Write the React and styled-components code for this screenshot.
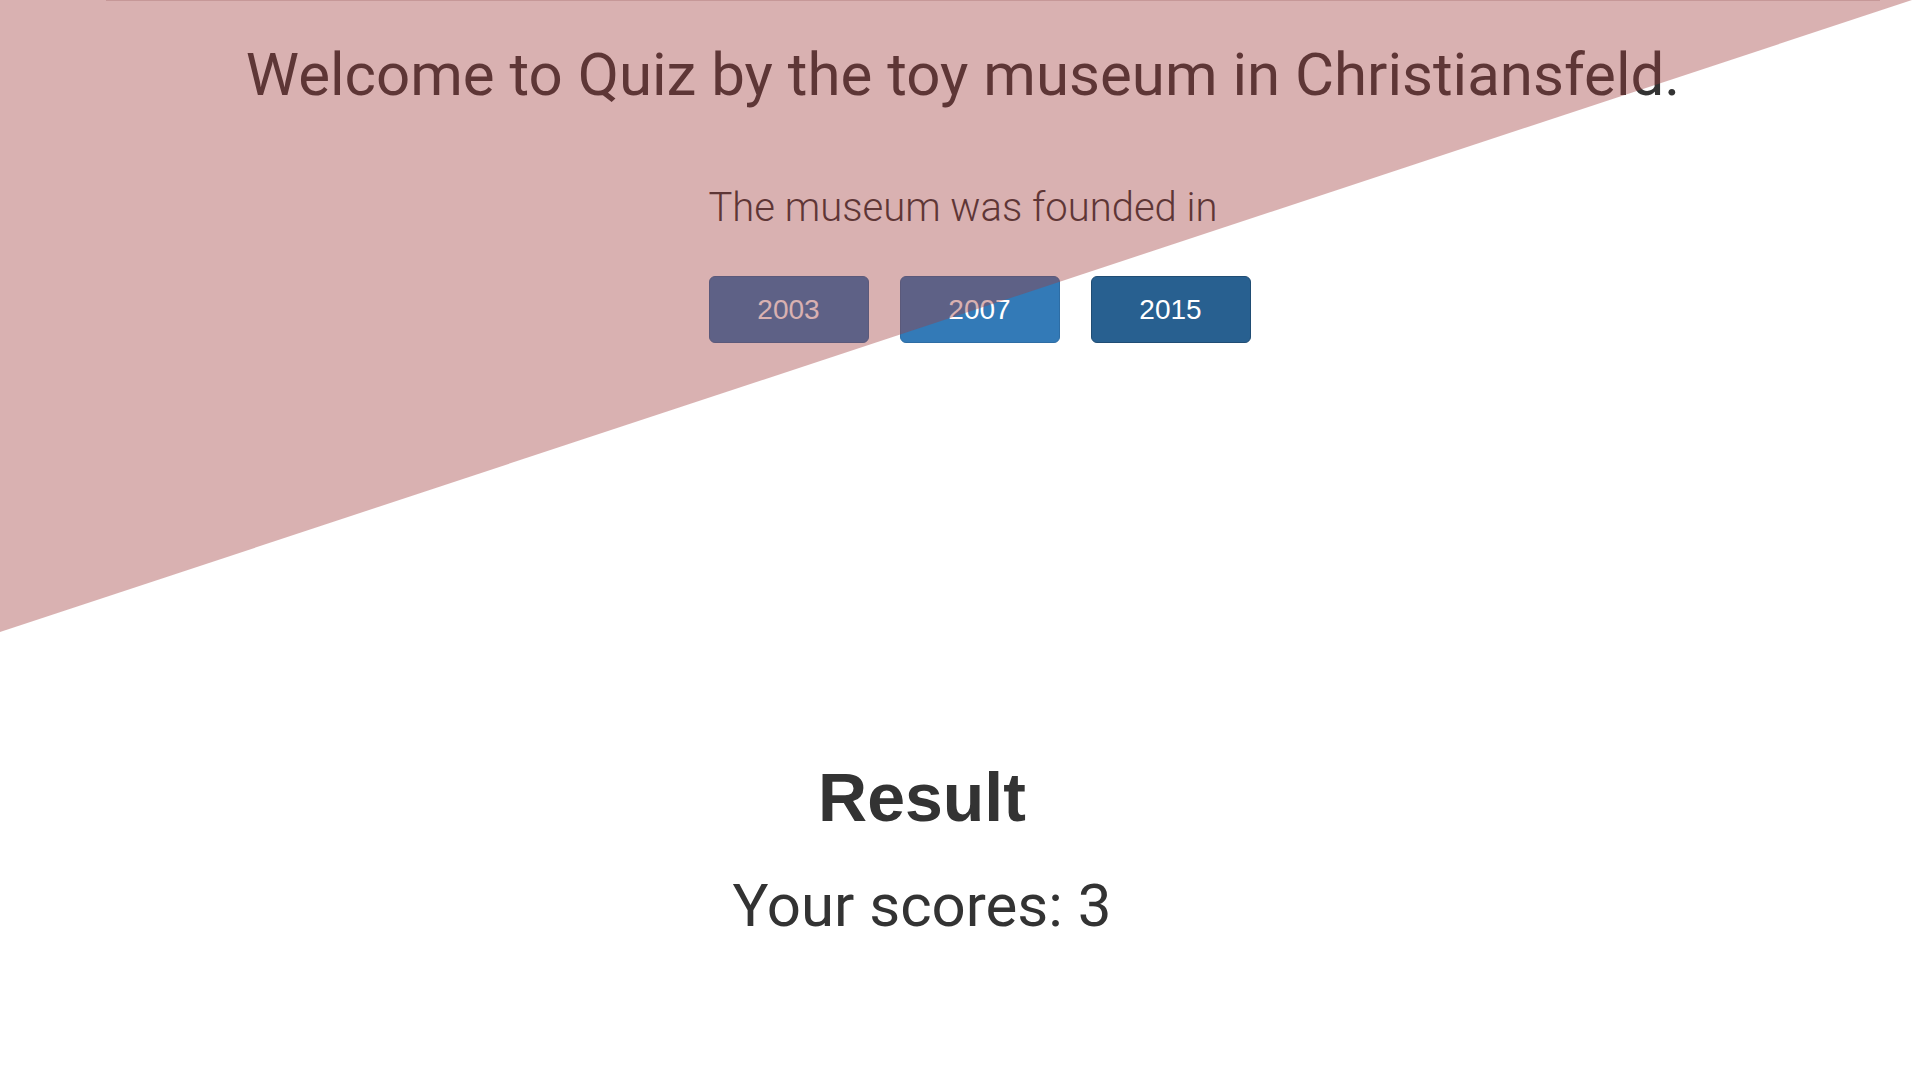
import React from "react";
import styled, { createGlobalStyle } from "styled-components";

const Global = createGlobalStyle`
  html, body { margin: 0; padding: 0; background: #fff; }
  body { font-family: Roboto, "Liberation Sans", sans-serif; color: #333; }
`;

const Page = styled.div`
  position: relative;
  width: 1920px;
  height: 1080px;
  overflow: hidden;
  display: flex;
  flex-direction: column;
`;

const Overlay = styled.div`
  position: absolute;
  left: 0;
  top: 0;
  width: 1912px;
  height: 632px;
  background: rgba(159, 59, 59, 0.4);
  clip-path: polygon(0 0, 100% 0, 0 100%);
  pointer-events: none;
  &::after {
    content: "";
    position: absolute;
    top: 0;
    left: 106px;
    width: 1774px;
    height: 1px;
    background: rgba(110, 40, 40, 0.18);
  }
`;

const Title = styled.h1`
  margin: 45px 0 0;
  padding-left: 6px;
  font-family: Roboto, sans-serif;
  font-weight: 400;
  font-size: 60px;
  line-height: 1;
  text-align: center;
  color: #333;
`;

const Question = styled.p`
  margin: 83px 0 0;
  padding-left: 6px;
  font-family: Roboto, sans-serif;
  font-weight: 300;
  font-size: 40px;
  line-height: 1;
  text-align: center;
  color: #333;
`;

const Answers = styled.div`
  margin-top: 48px;
  display: flex;
  justify-content: center;
  gap: 31px;
  padding-left: 39px;
`;

const Answer = styled.button`
  width: 160px;
  height: 67px;
  border-radius: 6px;
  border: 1px solid ${(p) => (p.$active ? "#204d74" : "#2e6da4")};
  background: ${(p) => (p.$active ? "#286090" : "#337ab7")};
  color: #fff;
  font-family: "Liberation Sans", Arial, sans-serif;
  font-size: 28px;
  padding: 0;
  cursor: pointer;
`;

const Result = styled.section`
  margin-top: 420px;
  padding-right: 76px;
  display: flex;
  flex-direction: column;
  align-items: center;
`;

const ResultTitle = styled.h2`
  margin: 0;
  font-family: "Liberation Sans", Arial, sans-serif;
  font-weight: 700;
  font-size: 68px;
  line-height: 1;
  color: #333;
`;

const Score = styled.p`
  margin: 45px 0 0;
  font-family: Roboto, sans-serif;
  font-weight: 400;
  font-size: 60px;
  line-height: 1;
  color: #333;
`;

export default function App() {
  const years = [
    { y: "2003", active: false },
    { y: "2007", active: false },
    { y: "2015", active: true },
  ];
  return (
    <>
      <Global />
      <Page>
        <Title>Welcome to Quiz by the toy museum in Christiansfeld.</Title>
        <Question>The museum was founded in</Question>
        <Answers>
          {years.map((a) => (
            <Answer key={a.y} $active={a.active}>
              {a.y}
            </Answer>
          ))}
        </Answers>
        <Result>
          <ResultTitle>Result</ResultTitle>
          <Score>Your scores: 3</Score>
        </Result>
        <Overlay />
      </Page>
    </>
  );
}
